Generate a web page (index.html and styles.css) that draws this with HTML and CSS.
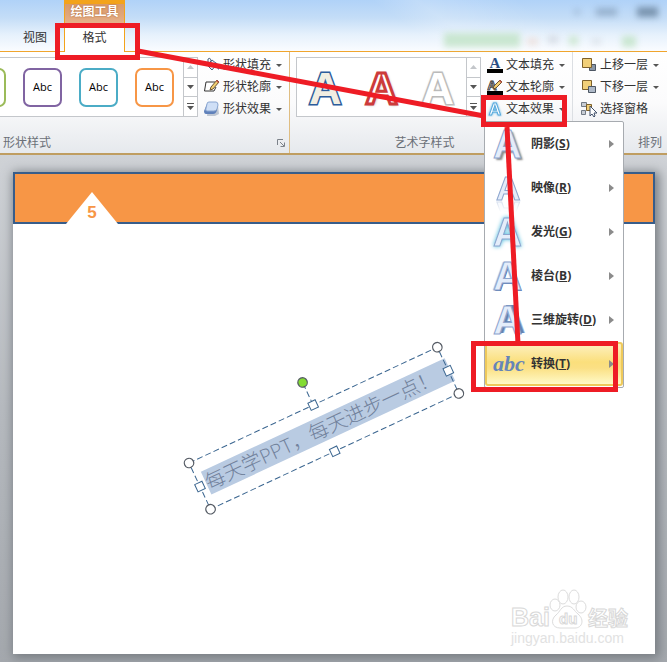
FILE: index.html
```html
<!doctype html>
<html lang="zh-CN">
<head>
  <meta charset="UTF-8">
  <meta name="viewport" content="width=device-width, initial-scale=1.0">
  <title>艺术字样式</title>
  <link rel="stylesheet" href="styles.css">
</head>

<body>
  <header class="tabs">
    <svg class="backdrop" width="240" height="50" viewBox="0 0 240 50" aria-hidden="true">
      <g fill="#5c7690">
        <circle cx="150" cy="12" r="3" opacity=".3"/>
        <rect x="169" y="8" width="21" height="8" opacity=".4"/>
        <rect x="210" y="7" width="21" height="10" opacity=".7"/>
      </g>
      <rect x="17" y="33" width="76" height="14" fill="#b9dfbd" opacity=".7"/>
      <rect x="100" y="38" width="11" height="7" fill="#ecd3cb" opacity=".6"/>
      <rect x="121" y="36" width="10" height="7" fill="#c4ccd4" opacity=".6"/>
      <rect x="142" y="36" width="9" height="9" fill="#c2e2c2" opacity=".7"/>
      <rect x="165" y="39" width="9" height="5" fill="#cdd4da" opacity=".6"/>
      <rect x="195" y="36" width="14" height="11" fill="#b9dfbd" opacity=".7"/>
    </svg>
    <nav class="tab-list">
      <a class="tab" href="#view">视图</a>
      <div class="context-tab">
        <span class="context-title">绘图工具</span>
        <a class="tab active" href="#format">格式</a>
      </div>
    </nav>
  </header>

  <section class="ribbon">
    <div class="group shape-group">
      <div class="group-body">
        <div class="gallery">
          <div class="gallery-items shapes">
            <button class="shape green" aria-label="绿色轮廓"></button>
            <button class="shape purple">Abc</button>
            <button class="shape teal">Abc</button>
            <button class="shape orange">Abc</button>
          </div>
          <div class="scroller">
            <button class="disabled" aria-label="上一行"><svg width="7" height="4"><path d="M0 4h7L3.500 0z"/></svg></button>
            <button aria-label="下一行"><svg width="7" height="4"><path d="M0 0h7L3.500 4z"/></svg></button>
            <button aria-label="其他"><svg width="7" height="7"><path d="M0 0h7v1H0zM0 3h7L3.500 7z"/></svg></button>
          </div>
        </div>
        <div class="commands">
          <button class="command">
            <svg class="icon" viewBox="0 0 16 16"><path d="M3 8l5-5 5 4-5 6z" fill="#e8eef6" stroke="#47617f"/><path d="M4 7V2q2-2 3 1v4" fill="none" stroke="#47617f"/><path d="M11 5q4 1 4 8-3-2-4-8z" fill="#3972b5"/></svg>
            <span>形状填充</span><i class="caret"></i>
          </button>
          <button class="command">
            <svg class="icon" viewBox="0 0 16 16"><path d="M11 3H2L0.500 12H10l2-4" fill="#fff" stroke="#333"/><path d="M6 11l1-3 6-7 2 2-6 7z" fill="#f2cf72" stroke="#6b5430"/><path d="M12 2l1-1 2 2-1 1z" fill="#c75249"/></svg>
            <span>形状轮廓</span><i class="caret"></i>
          </button>
          <button class="command">
            <svg class="icon" viewBox="0 0 16 16"><path d="M4 5l10 0 1 8-4 2H3z" fill="#bec6d2"/><path d="M3 3l10-1v7q-1 4-4 4H2q-2 0-2-3z" fill="#5f80ba"/><path d="M5 1h7q2 0 2 3l-1 4q-1 2-3 2H3Q1 10 2 7l1-4q0-2 2-2z" fill="#cfdff6" stroke="#8aa6d1"/></svg>
            <span>形状效果</span><i class="caret"></i>
          </button>
        </div>
      </div>
      <div class="group-label">
        <span>形状样式</span>
        <button class="launcher" aria-label="设置形状格式"><svg width="8" height="8" fill="none" stroke="#7c828a"><path d="M.5 6V.5H6M3 3l4 4M7.500 3.500v4h-4"/></svg></button>
      </div>
    </div>

    <div class="group wordart-group">
      <div class="group-body">
        <div class="gallery">
          <div class="gallery-items letters">
            <button class="letter cream">A</button>
            <button class="letter red">A</button>
            <button class="letter white">A</button>
          </div>
          <div class="scroller">
            <button class="disabled" aria-label="上一行"><svg width="7" height="4"><path d="M0 4h7L3.500 0z"/></svg></button>
            <button aria-label="下一行"><svg width="7" height="4"><path d="M0 0h7L3.500 4z"/></svg></button>
            <button aria-label="其他"><svg width="7" height="7"><path d="M0 0h7v1H0zM0 3h7L3.500 7z"/></svg></button>
          </div>
        </div>
        <div class="commands">
          <button class="command">
            <svg class="icon" viewBox="0 0 16 16"><text class="fill-letter" x="8" y="11">A</text><path d="M0 12h16v4H0z"/></svg>
            <span>文本填充</span><i class="caret"></i>
          </button>
          <button class="command">
            <svg class="icon" viewBox="0 0 16 16"><text class="outline-letter" x="5" y="11">A</text><path d="M6 10l1-3 6-6 2 2-6 6z" fill="#f2cf72" stroke="#6b5430"/><path d="M12 2l1-1 2 2-1 1z" fill="#c75249"/><path d="M0 12h16v4H0z"/></svg>
            <span>文本轮廓</span><i class="caret"></i>
          </button>
          <div class="dropdown">
            <button class="command" aria-expanded="true">
              <svg class="icon" viewBox="0 0 16 16"><text class="glow-letter" x="8" y="14">A</text></svg>
              <span>文本效果</span><i class="caret"></i>
            </button>
            <div class="menu" role="menu">
              <button class="menu-item" role="menuitem"><span class="effect shadow">A</span><span>阴影(<u>S</u>)</span><i class="arrow"></i></button>
              <button class="menu-item" role="menuitem"><span class="effect reflection">A</span><span>映像(<u>R</u>)</span><i class="arrow"></i></button>
              <button class="menu-item" role="menuitem"><span class="effect glow">A</span><span>发光(<u>G</u>)</span><i class="arrow"></i></button>
              <button class="menu-item" role="menuitem"><span class="effect bevel">A</span><span>棱台(<u>B</u>)</span><i class="arrow"></i></button>
              <button class="menu-item" role="menuitem"><span class="effect rotation">A</span><span>三维旋转(<u>D</u>)</span><i class="arrow"></i></button>
              <button class="menu-item selected" role="menuitem"><span class="effect warp">abc</span><span>转换(<u>T</u>)</span><i class="arrow"></i></button>
            </div>
          </div>
        </div>
      </div>
      <div class="group-label centered"><span>艺术字样式</span></div>
    </div>

    <div class="group arrange-group">
      <div class="group-body">
        <div class="commands">
          <button class="command">
            <svg class="icon" viewBox="0 0 16 16"><path d="M8.500 7.500h6v6h-6z" fill="#8996a6" stroke="#4c5663"/><path d="M1.500 1.500h9v9h-9z" fill="#f1cf78" stroke="#7d602b"/></svg>
            <span>上移一层</span><i class="caret"></i>
          </button>
          <button class="command">
            <svg class="icon" viewBox="0 0 16 16"><path d="M1.500 1.500h9v9h-9z" fill="#f1cf78" stroke="#7d602b"/><path d="M7.500 7.500h7v6h-7z" fill="#aeb9c8" stroke="#4c5663"/></svg>
            <span>下移一层</span><i class="caret"></i>
          </button>
          <button class="command">
            <svg class="icon" viewBox="0 0 16 16"><path d="M.5 1.500h5v4h-5zM.5 9.500h4v4h-4z" fill="#c8cdd4" stroke="#727a85"/><path d="M5.500 3.500h5v6h-5z" fill="#f1cf78" stroke="#7d602b"/><path d="M9 5v10l2-2 2 3 1-1-1-3h3z" fill="#fff" stroke="#41516b"/></svg>
            <span>选择窗格</span>
          </button>
        </div>
      </div>
      <div class="group-label centered"><span>排列</span></div>
    </div>
  </section>

  <main class="workspace">
    <article class="slide">
      <div class="slide-band">
        <div class="page-number"><span>5</span></div>
      </div>

      <!-- selected text box with its resize and rotate handles -->
      <svg class="textbox" width="290" height="185" viewBox="0 0 290 185">
        <g transform="translate(9 128) rotate(-25)">
          <rect x="7" y="13" width="269" height="25" fill="#b9cbe2"/>
          <text class="handwriting" x="7" y="33">每天学PPT，每天进步一点！</text>
          <g fill="none" stroke="#3b6690" stroke-dasharray="6 3">
            <rect width="274" height="51"/>
            <path d="M137 0v-24"/>
          </g>
          <g fill="#fff" stroke="#3b6690">
            <rect x="133" y="-4" width="8" height="8"/>
            <rect x="133" y="47" width="8" height="8"/>
            <rect x="-4" y="22" width="8" height="8"/>
            <rect x="270" y="22" width="8" height="8"/>
          </g>
          <g fill="#fff" stroke="#555b64" stroke-width="1.300">
            <circle r="4.700"/>
            <circle cx="274" r="4.700"/>
            <circle cx="274" cy="51" r="4.700"/>
            <circle cy="51" r="4.700"/>
            <circle cx="137" cy="-25" r="4.700" fill="#83dc33"/>
          </g>
        </g>
      </svg>

      <svg class="watermark" width="124" height="66" viewBox="0 0 124 66">
        <g fill="#fff" stroke="#dcdcdc">
          <ellipse cx="48" cy="19" rx="5" ry="6"/>
          <ellipse cx="56" cy="11" rx="5" ry="7"/>
          <ellipse cx="67" cy="11" rx="5" ry="7"/>
          <ellipse cx="74" cy="21" rx="5" ry="6"/>
          <path d="M60 20c6 0 7 5 11 8 7 6 4 14-3 14H53c-8 0-10-8-4-13 4-3 5-9 11-9z"/>
        </g>
        <text class="mark" x="4" y="40">Bai</text>
        <text class="mark small" x="52" y="38">du</text>
        <text class="mark cjk" x="81" y="40">经验</text>
        <text class="mark url" x="4" y="57">jingyan.baidu.com</text>
      </svg>
    </article>
  </main>

  <svg class="annotations" width="667" height="400" viewBox="0 0 667 400" fill="none" stroke="#ee1c25" stroke-width="5" aria-hidden="true">
    <rect x="57.500" y="25.500" width="80" height="32"/>
    <path d="M138 51L484 116"/>
    <rect x="483.500" y="97.500" width="81" height="27"/>
    <path d="M507 127L518 344"/>
    <rect x="473.500" y="343.500" width="142" height="46"/>
  </svg>
</body>
</html>
```

FILE: styles.css
```css
* {
  box-sizing: border-box;
}

body {
  display: flex;
  position: relative;
  flex-direction: column;
  min-height: 100vh;
  margin: 0;
  overflow-x: hidden;
  color: #333;
  font: 12px/22px "Open Sans", "Noto Sans CJK SC", sans-serif;
}

button {
  margin: 0;
  padding: 0;
  color: inherit;
  font: inherit;
  background: none;
  border: none;
}

svg {
  display: block;
}

/* tabs */
.tabs {
  position: relative;
  height: 51px;
  background:
    linear-gradient(35deg, transparent 60%, rgba(255, 255, 255, .2) 66%, transparent 80%),
    linear-gradient(#b0d2f8, #c4ddf7 35%, #e6f1fc 68%, #fafcff);
}

.backdrop {
  position: absolute;
  top: 0;
  right: 0;
  filter: blur(3px);
}

.tab-list {
  display: flex;
  position: relative;
  height: 52px;
  padding-left: 6px;
  align-items: flex-end;
}

.tab {
  width: 58px;
  height: 25px;
  color: #333;
  text-align: center;
  text-decoration: none;
}

.context-tab {
  width: 61px;
  height: 52px;
  background: #fff;
  border: solid #f3a31b;
  border-width: 4px 1px 0;
}

.context-title {
  display: block;
  height: 23px;
  color: #fff;
  font-weight: bold;
  line-height: 16px;
  text-align: center;
  text-shadow: 0 0 2px #a65c2b;
  background: linear-gradient(#d99a68, #e8b48f);
}

.tab.active {
  display: block;
  width: auto;
  height: 25px;
}

/* ribbon */
.ribbon {
  display: flex;
  height: 104px;
  background: linear-gradient(#fff, #fbfbfc 50%, #e6e9ed);
  border-top: 1px solid #f0a52d;
  border-bottom: 2px solid #bf9d61;
}

.group {
  display: flex;
  flex: none;
  flex-direction: column;
  justify-content: space-between;
}

.shape-group {
  width: 290px;
  border-right: 1px solid #dfbd82;
}

.wordart-group {
  width: 283px;
  padding-left: 6px;
  border-right: 1px solid #dcdfe3;
}

.arrange-group {
  flex: 1;
  min-width: 0;
  padding-left: 8px;
}

.group-body {
  display: flex;
  padding-top: 2px;
}

.group-label {
  display: flex;
  height: 20px;
  padding: 0 4px 0 3px;
  color: #6b7078;
  line-height: 18px;
  align-items: center;
  justify-content: space-between;
}

.group-label.centered {
  padding-right: 22px;
  justify-content: center;
}

.arrange-group .group-label {
  padding-right: 5px;
  justify-content: flex-end;
}

.gallery {
  display: flex;
  width: 198px;
  height: 60px;
  margin-top: 3px;
  background: #fff;
  border: solid #c4c7cb;
  border-width: 1px 0;
}

.wordart-group .gallery {
  width: 185px;
  border-left-width: 1px;
}

.gallery-items {
  display: flex;
  flex: 1;
  min-width: 0;
  overflow: hidden;
  align-items: center;
}

.shapes {
  padding-right: 9px;
  gap: 17px;
  justify-content: flex-end;
}

.shape {
  flex: none;
  width: 39px;
  height: 39px;
  color: #000;
  font-size: 11px;
  line-height: 30px;
  background: #fff;
  border: 2px solid;
  border-radius: 7px;
}

.shape.green {
  border-color: #9bbb59;
}

.shape.purple {
  border-color: #8064a2;
}

.shape.teal {
  border-color: #4bacc6;
}

.shape.orange {
  border-color: #f79646;
}

.letters {
  justify-content: space-around;
}

.letter {
  padding-top: 4px;
  font: bold 45px/50px "Liberation Sans", sans-serif;
  -webkit-text-stroke: 3px;
  paint-order: stroke fill;
}

.letter.cream {
  color: #f1eee2;
  -webkit-text-stroke-color: #2c5c9b;
}

.letter.red {
  color: #fff;
  -webkit-text-stroke: 3px #cd3b3b;
  text-shadow: 1px 1px 3px #999;
  paint-order: fill;
}

.letter.white {
  color: #fff;
  -webkit-text-stroke-color: #c3c3c3;
  text-shadow: 0 0 3px #aaa;
}

.scroller {
  display: flex;
  flex-direction: column;
  width: 15px;
}

.scroller button {
  display: flex;
  flex: 1;
  align-items: center;
  justify-content: center;
  fill: #555;
  border: solid #c4c7cb;
  border-width: 0 1px 1px;
}

.scroller button:last-child {
  border-bottom: none;
}

.scroller .disabled {
  fill: #c3c6ca;
}

.commands {
  padding-left: 6px;
}

.arrange-group .commands {
  padding-left: 0;
}

.command {
  display: flex;
  height: 22px;
  gap: 3px;
  align-items: center;
  white-space: nowrap;
}

.icon {
  flex: none;
  width: 16px;
  height: 16px;
}

.icon text {
  font-family: "Liberation Sans", sans-serif;
  font-weight: bold;
  text-anchor: middle;
}

.icon .fill-letter {
  fill: #2b4f86;
  font-family: "Liberation Serif", serif;
  font-size: 15px;
}

.icon .outline-letter {
  fill: #fff;
  stroke: #444;
  font-size: 13px;
}

.icon .glow-letter {
  fill: #fff;
  stroke: #5aa9dc;
  font-size: 17px;
  filter: drop-shadow(0 0 1px #57b6e6);
}

.caret {
  margin-left: 2px;
  border: solid transparent;
  border-width: 3px 3px 0;
  border-top-color: #555;
}

.launcher {
  width: 8px;
  height: 8px;
}

/* text effects menu */
.dropdown {
  position: relative;
}

.menu {
  position: absolute;
  z-index: 2;
  top: 23px;
  left: -3px;
  width: 140px;
  padding-bottom: 1px;
  background: #fff;
  border: 1px solid #a7abb0;
  border-radius: 2px;
}

.menu-item {
  display: flex;
  width: 100%;
  height: 44px;
  padding: 0 9px 0 8px;
  gap: 6px;
  align-items: center;
  font-weight: bold;
  text-align: left;
  white-space: nowrap;
}

.menu-item.selected {
  background: linear-gradient(#fdf0c0, #fbdf7c 45%, #fbe084 60%, #fffac8);
  border: 2px solid #eec95b;
  border-radius: 3px;
  padding: 0 7px 0 6px;
}

.arrow {
  margin-left: auto;
  border: solid transparent;
  border-width: 4px 0 4px 5px;
  border-left-color: #8b8b8b;
}

.effect {
  width: 32px;
  color: #e4edfa;
  font: bold 40px/40px "Liberation Sans", sans-serif;
  -webkit-text-stroke: 1px #8da6cf;
}

.effect.shadow {
  text-shadow: 2px 2px 2px #888;
}

.effect.reflection {
  font-size: 34px;
  line-height: 34px;
  padding-left: 3px;
  -webkit-box-reflect: below -8px linear-gradient(transparent 55%, rgba(0, 0, 0, .5));
}

.effect.glow {
  filter: drop-shadow(0 0 2px #46b8dc);
}

.effect.bevel {
  text-shadow: 1px 1px 0 #4969a5, -1px 0 1px #a5b8d8;
}

.effect.rotation {
  text-shadow: 1px 0 #6483b1, 2px -1px #6483b1, 3px -1px #6483b1, 4px -1px #a2b8d9;
}

.effect.warp {
  color: #6685b8;
  font: italic bold 22px/24px "Liberation Sans Narrow", "Liberation Serif", serif;
  -webkit-text-stroke: 0;
}

/* slide */
.workspace {
  display: flex;
  flex: 1;
  padding: 17px 12px 8px 13px;
  background: linear-gradient(#cfd2d6, #b6babf 50%, #a4a8ad);
}

.slide {
  position: relative;
  flex: 1;
  background: #fff;
  box-shadow: 2px 2px 10px 2px #777c82;
}

.slide-band {
  display: flex;
  height: 52px;
  padding-left: 51px;
  align-items: flex-end;
  background: #f79646;
  border: 2px solid #385d8a;
}

.page-number {
  display: flex;
  width: 52px;
  height: 32px;
  margin-bottom: -2px;
  color: #f79646;
  font: bold 17px/22px "Liberation Sans", sans-serif;
  align-items: flex-end;
  justify-content: center;
  background: #fff;
  clip-path: polygon(50% 0, 100% 100%, 0 100%);
}

.textbox {
  position: absolute;
  top: 163px;
  left: 167px;
}

.handwriting {
  fill: #71819b;
  font-size: 20px;
  font-weight: 300;
}

.watermark {
  position: absolute;
  right: 24px;
  bottom: 2px;
}

.mark {
  fill: #fff;
  stroke: #d8d8d8;
  font: bold 25px "Liberation Sans", "Noto Sans CJK SC", sans-serif;
}

.mark.small {
  font-size: 15px;
}

.mark.cjk {
  font-size: 20px;
}

.mark.url {
  fill: #e2e2e2;
  stroke: none;
  font-size: 14px;
  font-weight: normal;
}

.annotations {
  position: absolute;
  z-index: 3;
  top: 0;
  left: 0;
  pointer-events: none;
}
```
